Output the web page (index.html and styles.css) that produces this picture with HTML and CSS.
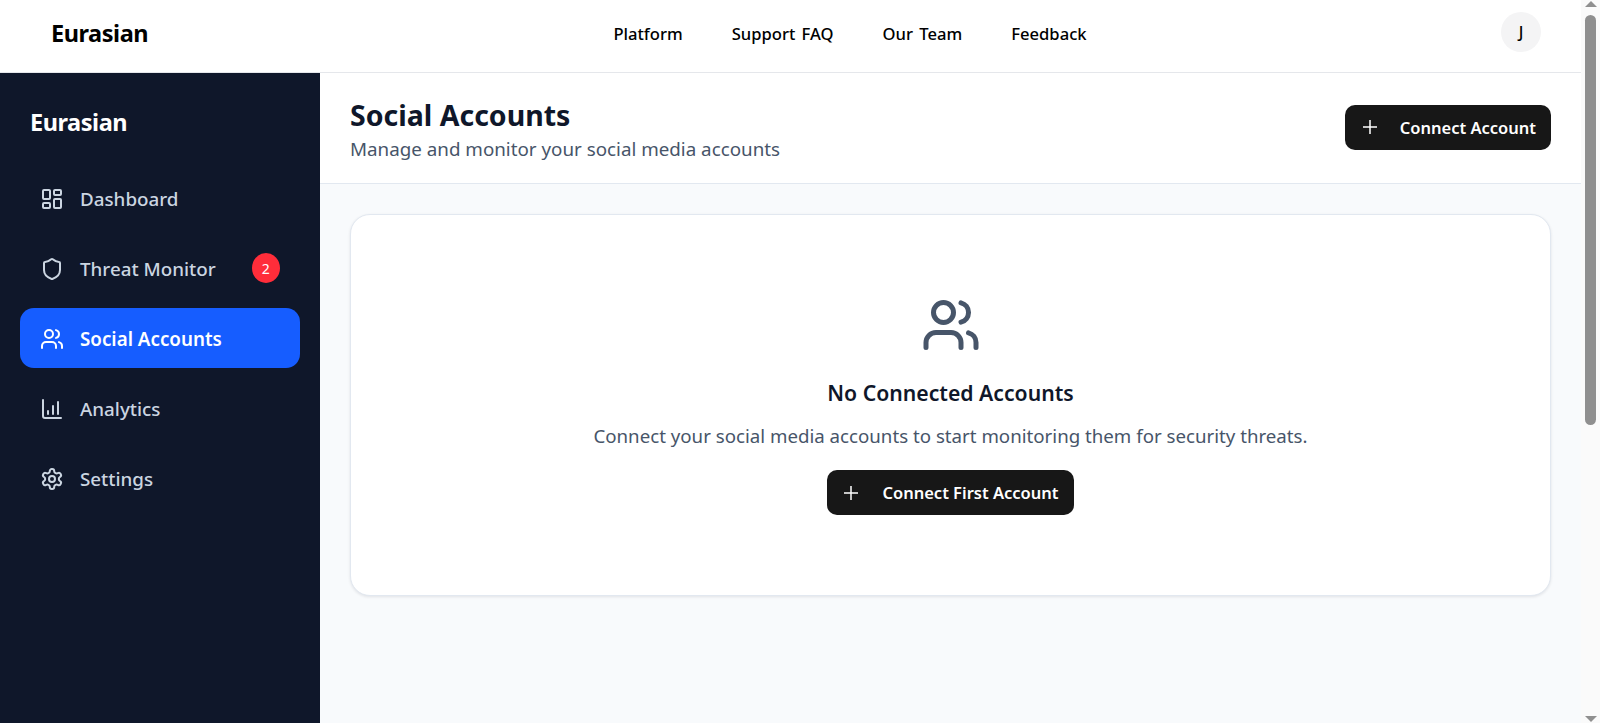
FILE: index.html
```html
<!DOCTYPE html>
<html lang="en">
  <head>
    <meta charset="UTF-8" />
    <meta name="viewport" content="width=device-width, initial-scale=1.0" />
    <title>Eurasian - Social Accounts</title>
    <link rel="stylesheet" href="styles.css">
  </head>
  <body>
    <div class="page">
      <header class="topbar">
        <div class="logo">Eurasian</div>
        <nav class="topnav">
          <a href="#">Platform</a>
          <a href="#">Support FAQ</a>
          <a href="#">Our Team</a>
          <a href="#">Feedback</a>
        </nav>
        <div class="avatar">J</div>
      </header>
      <div class="layout">
        <aside class="sidebar">
          <div class="sidebar-logo">Eurasian</div>
          <ul class="sidemenu">
            <li class="item">
              <svg class="icon" viewBox="0 0 24 24"><rect x="3" y="3" width="7" height="9" rx="1"/><rect x="14" y="3" width="7" height="5" rx="1"/><rect x="14" y="12" width="7" height="9" rx="1"/><rect x="3" y="16" width="7" height="5" rx="1"/></svg>
              <span>Dashboard</span>
            </li>
            <li class="item">
              <svg class="icon" viewBox="0 0 24 24"><path d="M20 13c0 5-3.5 7.5-7.66 8.95a1 1 0 0 1-.67-.01C7.5 20.5 4 18 4 13V6a1 1 0 0 1 1-1c2 0 4.5-1.2 6.24-2.72a1.17 1.17 0 0 1 1.52 0C14.51 3.81 17 5 19 5a1 1 0 0 1 1 1z"/></svg>
              <span>Threat Monitor</span>
              <span class="badge">2</span>
            </li>
            <li class="item active">
              <svg class="icon" viewBox="0 0 24 24"><path d="M16 21v-2a4 4 0 0 0-4-4H6a4 4 0 0 0-4 4v2"/><circle cx="9" cy="7" r="4"/><path d="M22 21v-2a4 4 0 0 0-3-3.87"/><path d="M16 3.13a4 4 0 0 1 0 7.75"/></svg>
              <span>Social Accounts</span>
            </li>
            <li class="item">
              <svg class="icon" viewBox="0 0 24 24"><path d="M3 3v16a2 2 0 0 0 2 2h16"/><path d="M8 17v-3"/><path d="M13 17V9"/><path d="M18 17V5"/></svg>
              <span>Analytics</span>
            </li>
            <li class="item">
              <svg class="icon" viewBox="0 0 24 24"><path d="M12.22 2h-.44a2 2 0 0 0-2 2v.18a2 2 0 0 1-1 1.73l-.43.25a2 2 0 0 1-2 0l-.15-.08a2 2 0 0 0-2.73.73l-.22.38a2 2 0 0 0 .73 2.73l.15.1a2 2 0 0 1 1 1.72v.51a2 2 0 0 1-1 1.74l-.15.09a2 2 0 0 0-.73 2.73l.22.38a2 2 0 0 0 2.73.73l.15-.08a2 2 0 0 1 2 0l.43.25a2 2 0 0 1 1 1.73V20a2 2 0 0 0 2 2h.44a2 2 0 0 0 2-2v-.18a2 2 0 0 1 1-1.73l.43-.25a2 2 0 0 1 2 0l.15.08a2 2 0 0 0 2.73-.73l.22-.39a2 2 0 0 0-.73-2.73l-.15-.08a2 2 0 0 1-1-1.74v-.5a2 2 0 0 1 1-1.74l.15-.09a2 2 0 0 0 .73-2.73l-.22-.38a2 2 0 0 0-2.73-.73l-.15.08a2 2 0 0 1-2 0l-.43-.25a2 2 0 0 1-1-1.73V4a2 2 0 0 0-2-2z"/><circle cx="12" cy="12" r="3"/></svg>
              <span>Settings</span>
            </li>
          </ul>
        </aside>
        <main class="content">
          <section class="page-head">
            <div class="head-text">
              <h1>Social Accounts</h1>
              <p>Manage and monitor your social media accounts</p>
            </div>
            <button class="btn head-btn">
              <svg class="plus" viewBox="0 0 16 16"><path d="M8 1v14M1 8h14"/></svg>
              Connect Account
            </button>
          </section>
          <section class="body">
            <article class="empty">
              <svg class="empty-icon" viewBox="0 0 24 24"><path d="M16 21v-2a4 4 0 0 0-4-4H6a4 4 0 0 0-4 4v2"/><circle cx="9" cy="7" r="4"/><path d="M22 21v-2a4 4 0 0 0-3-3.87"/><path d="M16 3.13a4 4 0 0 1 0 7.75"/></svg>
              <h2>No Connected Accounts</h2>
              <p>Connect your social media accounts to start monitoring them for security threats.</p>
              <button class="btn empty-btn">
                <svg class="plus" viewBox="0 0 16 16"><path d="M8 1v14M1 8h14"/></svg>
                Connect First Account
              </button>
            </article>
          </section>
        </main>
      </div>
    </div>
    <div class="scrollbar">
      <div class="arrow up"></div>
      <div class="thumb"></div>
      <div class="arrow down"></div>
    </div>
  </body>
</html>
```

FILE: styles.css
```css
* {
  box-sizing: border-box;
  margin: 0;
}

body {
  display: flex;
  height: 723px;
  overflow: hidden;
  font-family: "Noto Sans", sans-serif;
  background-color: #f8fafc;
}

.page {
  flex: 1;
  display: flex;
  flex-direction: column;
  min-width: 0;
}

/* top navigation */
.topbar {
  display: flex;
  align-items: center;
  justify-content: space-between;
  height: 73px;
  padding: 0 40px 8px 51px;
  background-color: white;
  border-bottom: 1px solid #e5e7eb;
}

.logo {
  width: 100px;
  padding-top: 2px;
  font-size: 23.5px;
  font-weight: 700;
  letter-spacing: -0.45px;
  color: #000;
}

.topnav {
  display: flex;
  gap: 49px;
  margin-left: 48px;
  padding-top: 2px;
}

.topnav a {
  font-size: 16.6px;
  font-weight: 500;
  word-spacing: 2px;
  color: #000;
  text-decoration: none;
}

.avatar {
  display: flex;
  align-items: center;
  justify-content: center;
  width: 40px;
  height: 40px;
  border-radius: 50%;
  background-color: #f4f4f5;
  font-size: 16px;
  font-weight: 500;
  color: #000;
}

.layout {
  flex: 1;
  display: flex;
  min-height: 0;
}

/* sidebar */
.sidebar {
  width: 320px;
  flex-shrink: 0;
  padding: 30px 20px;
  background-color: #0f172a;
}

.sidebar-logo {
  padding-left: 10px;
  margin-bottom: 27px;
  font-size: 23.5px;
  font-weight: 700;
  line-height: 38px;
  letter-spacing: -0.45px;
  color: white;
}

.sidemenu {
  display: flex;
  flex-direction: column;
  gap: 10px;
  padding: 0;
  list-style-type: none;
}

.item {
  display: flex;
  align-items: center;
  gap: 16px;
  height: 60px;
  padding: 2px 20px 0;
  border-radius: 14px;
  font-size: 18.8px;
  font-weight: 500;
  color: #cbd5e1;
}

.item.active {
  background-color: #165dff;
  font-weight: 600;
  color: white;
}

.icon {
  width: 24px;
  height: 24px;
  flex-shrink: 0;
  fill: none;
  stroke: currentColor;
  stroke-width: 2;
  stroke-linecap: round;
  stroke-linejoin: round;
}

.badge {
  display: flex;
  align-items: center;
  justify-content: center;
  width: 28px;
  height: 30px;
  margin-top: -2px;
  margin-left: 20px;
  border-radius: 50%;
  background-color: #ff2d3a;
  font-size: 14px;
  font-weight: 400;
  color: white;
}

/* main */
.content {
  flex: 1;
  display: flex;
  flex-direction: column;
  min-width: 0;
}

.page-head {
  display: flex;
  align-items: center;
  justify-content: space-between;
  height: 111px;
  padding: 0 30px;
  background-color: white;
  border-bottom: 1px solid #e2e8f0;
}

.head-text {
  padding-top: 2px;
}

h1 {
  font-size: 28.5px;
  font-weight: 700;
  line-height: 38px;
  color: #0f172a;
}

.page-head p {
  margin-top: 2px;
  font-size: 18.8px;
  line-height: 27px;
  color: #475569;
}

.btn {
  display: inline-flex;
  align-items: center;
  gap: 22px;
  height: 45px;
  padding: 0 15px 0 17px;
  border: none;
  border-radius: 10px;
  background-color: #171717;
  font-family: inherit;
  font-size: 16.5px;
  font-weight: 600;
  color: white;
}

.head-btn {
  margin-bottom: 2px;
}

.empty-btn {
  gap: 23px;
  padding: 0 15px 0 16px;
}

.plus {
  width: 16px;
  height: 16px;
  fill: none;
  stroke: white;
  stroke-width: 1.5;
}

.body {
  padding: 30px;
}

.empty {
  display: flex;
  flex-direction: column;
  align-items: center;
  height: 382px;
  padding-top: 80px;
  background-color: white;
  border: 1px solid #e2e8f0;
  border-radius: 20px;
  box-shadow: 0 1px 3px rgba(15, 23, 42, 0.1);
}

.empty-icon {
  width: 60px;
  height: 60px;
  fill: none;
  stroke: #475569;
  stroke-width: 2;
  stroke-linecap: round;
  stroke-linejoin: round;
}

h2 {
  margin-top: 23px;
  font-size: 21.2px;
  font-weight: 600;
  line-height: 30px;
  color: #0f172a;
}

.empty p {
  margin-top: 14px;
  margin-bottom: 21px;
  font-size: 18.7px;
  line-height: 27px;
  color: #475569;
}

/* scrollbar */
.scrollbar {
  display: flex;
  flex-direction: column;
  align-items: center;
  justify-content: space-between;
  width: 19px;
  flex-shrink: 0;
  position: relative;
  background-color: #fafafa;
}

.arrow {
  width: 0;
  height: 0;
  border-left: 6px solid transparent;
  border-right: 6px solid transparent;
}

.arrow.up {
  margin-top: 1px;
  border-bottom: 6px solid #8f8f8f;
}

.arrow.down {
  margin-bottom: 1px;
  border-top: 6px solid #8f8f8f;
}

.thumb {
  position: absolute;
  top: 15px;
  left: 4px;
  width: 11px;
  height: 410px;
  border-radius: 6px;
  background-color: #8f8f8f;
}
```
